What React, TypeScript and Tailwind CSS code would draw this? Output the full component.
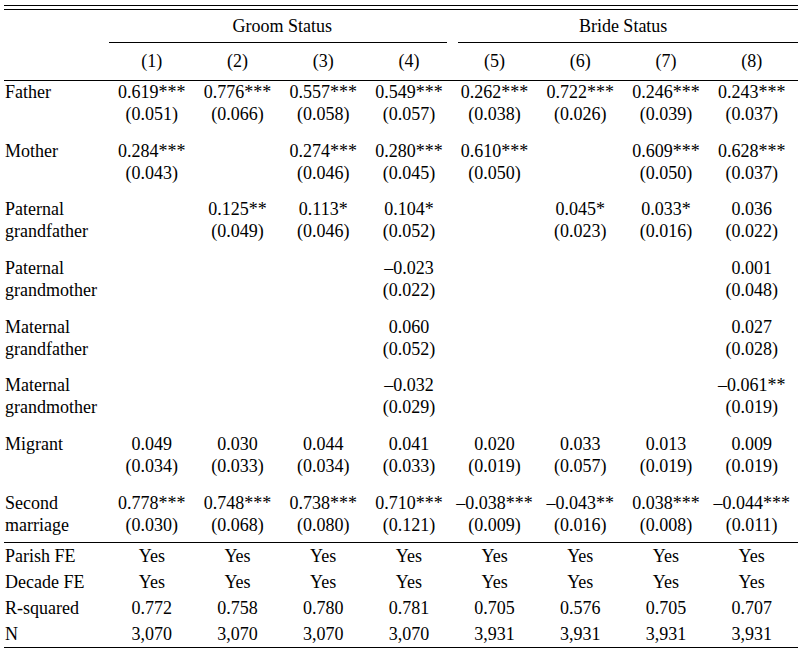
const cols = "grid grid-cols-[105px_repeat(8,85.7px)]";

type Cell = [string, string] | null;

const rows: { label: string[]; cells: Cell[] }[] = [
  {
    label: ["Father"],
    cells: [
      ["0.619***", "(0.051)"],
      ["0.776***", "(0.066)"],
      ["0.557***", "(0.058)"],
      ["0.549***", "(0.057)"],
      ["0.262***", "(0.038)"],
      ["0.722***", "(0.026)"],
      ["0.246***", "(0.039)"],
      ["0.243***", "(0.037)"],
    ],
  },
  {
    label: ["Mother"],
    cells: [
      ["0.284***", "(0.043)"],
      null,
      ["0.274***", "(0.046)"],
      ["0.280***", "(0.045)"],
      ["0.610***", "(0.050)"],
      null,
      ["0.609***", "(0.050)"],
      ["0.628***", "(0.037)"],
    ],
  },
  {
    label: ["Paternal", "grandfather"],
    cells: [
      null,
      ["0.125**", "(0.049)"],
      ["0.113*", "(0.046)"],
      ["0.104*", "(0.052)"],
      null,
      ["0.045*", "(0.023)"],
      ["0.033*", "(0.016)"],
      ["0.036", "(0.022)"],
    ],
  },
  {
    label: ["Paternal", "grandmother"],
    cells: [null, null, null, ["–0.023", "(0.022)"], null, null, null, ["0.001", "(0.048)"]],
  },
  {
    label: ["Maternal", "grandfather"],
    cells: [null, null, null, ["0.060", "(0.052)"], null, null, null, ["0.027", "(0.028)"]],
  },
  {
    label: ["Maternal", "grandmother"],
    cells: [null, null, null, ["–0.032", "(0.029)"], null, null, null, ["–0.061**", "(0.019)"]],
  },
  {
    label: ["Migrant"],
    cells: [
      ["0.049", "(0.034)"],
      ["0.030", "(0.033)"],
      ["0.044", "(0.034)"],
      ["0.041", "(0.033)"],
      ["0.020", "(0.019)"],
      ["0.033", "(0.057)"],
      ["0.013", "(0.019)"],
      ["0.009", "(0.019)"],
    ],
  },
  {
    label: ["Second", "marriage"],
    cells: [
      ["0.778***", "(0.030)"],
      ["0.748***", "(0.068)"],
      ["0.738***", "(0.080)"],
      ["0.710***", "(0.121)"],
      ["–0.038***", "(0.009)"],
      ["–0.043**", "(0.016)"],
      ["0.038***", "(0.008)"],
      ["–0.044***", "(0.011)"],
    ],
  },
];

const stats: { label: string; vals: string[] }[] = [
  { label: "Parish FE", vals: Array(8).fill("Yes") },
  { label: "Decade FE", vals: Array(8).fill("Yes") },
  { label: "R-squared", vals: ["0.772", "0.758", "0.780", "0.781", "0.705", "0.576", "0.705", "0.707"] },
  { label: "N", vals: ["3,070", "3,070", "3,070", "3,070", "3,931", "3,931", "3,931", "3,931"] },
];

export default function App() {
  return (
    <div className="w-[798px] h-[651px] bg-white text-black text-[18px] font-['Liberation_Serif','Times_New_Roman',serif] overflow-hidden">
      <div className="ml-[4px] pt-[5px]">
        {/* double top rule */}
        <div className="border-t border-black" />
        <div className="mt-[3px] border-t border-black" />

        {/* group headings */}
        <div className={`${cols} mt-[5px] leading-[22px]`}>
          <div />
          <div className="col-span-4 text-center pl-[4px]">Groom Status</div>
          <div className="col-span-4 text-center">Bride Status</div>
        </div>
        <div className="flex mt-[5px]">
          <div className="w-[105px]" />
          <div className="w-[338px] border-t border-black" />
          <div className="w-[11px]" />
          <div className="flex-1 border-t border-black" />
        </div>

        {/* column numbers */}
        <div className={`${cols} mt-[7px] leading-[22px]`}>
          <div />
          {[1, 2, 3, 4, 5, 6, 7, 8].map((n) => (
            <div key={n} className="text-center">
              ({n})
            </div>
          ))}
        </div>
        <div className="mt-[8px] border-t border-black" />

        {/* coefficient rows */}
        <div className="flex flex-col gap-[14.7px] pb-[6px] leading-[22px]">
          {rows.map((r, i) => (
            <div key={i} className={cols}>
              <div className="pl-[1px] whitespace-nowrap">
                {r.label.map((l) => (
                  <div key={l}>{l}</div>
                ))}
              </div>
              {r.cells.map((c, j) => (
                <div key={j} className="text-center whitespace-nowrap">
                  {c && (
                    <>
                      <div>{c[0]}</div>
                      <div>{c[1]}</div>
                    </>
                  )}
                </div>
              ))}
            </div>
          ))}
        </div>
        <div className="border-t border-black" />

        {/* fixed effects and stats */}
        <div className="leading-[26px]">
          {stats.map((s) => (
            <div key={s.label} className={cols}>
              <div className="pl-[1px] whitespace-nowrap">{s.label}</div>
              {s.vals.map((v, j) => (
                <div key={j} className="text-center">
                  {v}
                </div>
              ))}
            </div>
          ))}
        </div>
        <div className="border-t border-black" />
      </div>
    </div>
  );
}
